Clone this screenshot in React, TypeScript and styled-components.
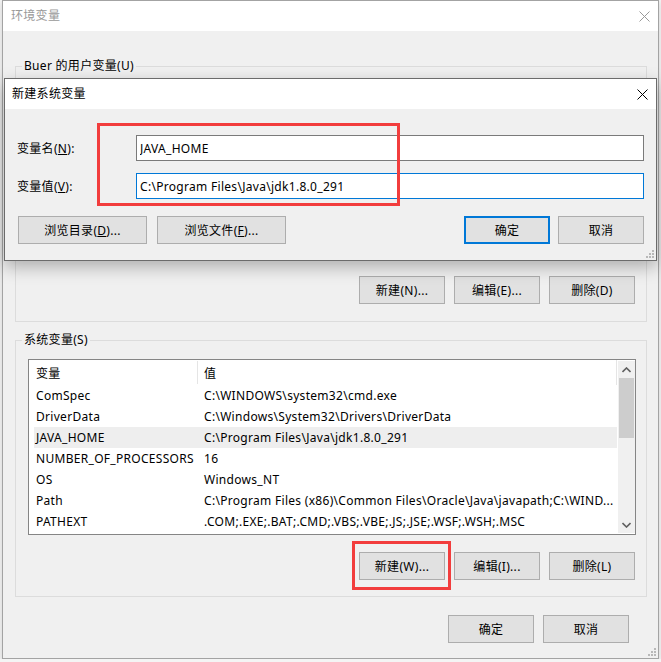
import styled, { createGlobalStyle } from "styled-components";

const GlobalStyle = createGlobalStyle`
  html, body {
    margin: 0;
    padding: 0;
  }
  body {
    background: #f4f4f4;
    font-family: "Noto Sans", "Noto Sans CJK SC", sans-serif;
    font-size: 12px;
    letter-spacing: 0.3px;
    color: #000;
  }
`;

const rows = [
  ["ComSpec", "C:\\WINDOWS\\system32\\cmd.exe"],
  ["DriverData", "C:\\Windows\\System32\\Drivers\\DriverData"],
  ["JAVA_HOME", "C:\\Program Files\\Java\\jdk1.8.0_291"],
  ["NUMBER_OF_PROCESSORS", "16"],
  ["OS", "Windows_NT"],
  [
    "Path",
    "C:\\Program Files (x86)\\Common Files\\Oracle\\Java\\javapath;C:\\WIND...",
  ],
  ["PATHEXT", ".COM;.EXE;.BAT;.CMD;.VBS;.VBE;.JS;.JSE;.WSF;.WSH;.MSC"],
];

const Window = styled.div`
  position: relative;
  box-sizing: border-box;
  width: 657px;
  height: 659px;
  margin-left: 2px;
  border: 1px solid #a3a3a3;
  background: #f0f0f0;
  display: flex;
  flex-direction: column;
  box-shadow: 0 2px 6px rgba(0, 0, 0, 0.15);
`;

const TitleBar = styled.div<{ $active?: boolean }>`
  height: 30px;
  flex: none;
  background: #fff;
  display: flex;
  align-items: center;
  justify-content: space-between;
  padding-left: ${(p) => (p.$active ? 7 : 8)}px;
  color: ${(p) => (p.$active ? "#000" : "#999")};
  line-height: 16px;
`;

const CloseBox = styled.div`
  width: 28px;
  height: 30px;
  display: flex;
  align-items: center;
  justify-content: center;
`;

const WindowBody = styled.div`
  display: flex;
  flex-direction: column;
  padding: 27px 11px 16px 12px;
`;

const GroupBox = styled.fieldset<{ $top?: number }>`
  margin: ${(p) => p.$top ?? 0}px 0 0 0;
  padding: 0;
  border: 1px solid #dcdcdc;
  min-width: 0;
`;

const GroupLegend = styled.legend`
  margin-left: 6px;
  padding: 0 2px;
  line-height: 16px;
`;

const GroupContent = styled.div<{ $bottom: number }>`
  display: flex;
  flex-direction: column;
  padding: 11px 10px ${(p) => p.$bottom}px 12px;
`;

const ListView = styled.div<{ $h: number }>`
  box-sizing: border-box;
  height: ${(p) => p.$h}px;
  border: 1px solid #858585;
  background: #fff;
  display: flex;
`;

const ListContent = styled.div`
  flex: 1;
  min-width: 0;
  display: flex;
  flex-direction: column;
`;

const ListHeader = styled.div`
  display: grid;
  grid-template-columns: 169px 1fr;
  height: 25px;
  align-items: stretch;
  border-right: 1px solid #e5e5e5;
`;

const HeaderCell = styled.div<{ $pad: number; $divider?: boolean }>`
  display: flex;
  align-items: center;
  padding-left: ${(p) => p.$pad}px;
  margin: 1px 0;
  border-right: ${(p) => (p.$divider ? "1px solid #e5e5e5" : "none")};
`;

const ListRow = styled.div<{ $selected?: boolean }>`
  display: grid;
  grid-template-columns: 168px 1fr;
  height: 21px;
  line-height: 21px;
  margin-left: 5px;
  background: ${(p) => (p.$selected ? "#eeeeee" : "transparent")};
`;

const Cell = styled.div`
  padding-left: 2px;
  white-space: nowrap;
  overflow: hidden;
`;

const ScrollBar = styled.div`
  width: 17px;
  margin: 1px 0 1px 1px;
  background: #f0f0f0;
  display: flex;
  flex-direction: column;
`;

const ScrollArrow = styled.div`
  height: 17px;
  display: flex;
  align-items: center;
  justify-content: center;
`;

const ScrollThumb = styled.div`
  height: 60px;
  margin: 0 1px;
  background: #cdcdcd;
`;

const ScrollTrack = styled.div`
  flex: 1;
`;

const ButtonRow = styled.div<{ $top: number; $right?: number }>`
  display: flex;
  justify-content: flex-end;
  gap: 9px;
  margin-top: ${(p) => p.$top}px;
  margin-right: ${(p) => p.$right ?? 0}px;
`;

const ButtonGroup = styled.div<{ $gap: number; $left?: number }>`
  display: flex;
  gap: ${(p) => p.$gap}px;
  margin-left: ${(p) => p.$left ?? 0}px;
`;

const Button = styled.button<{
  $w?: number;
  $primary?: boolean;
  $marked?: boolean;
}>`
  position: relative;
  box-sizing: border-box;
  width: ${(p) => p.$w ?? 86}px;
  height: 28px;
  padding: 0;
  background: #e1e1e1;
  border: ${(p) => (p.$primary ? "2px solid #0078d7" : "1px solid #adadad")};
  font-family: inherit;
  font-size: 12px;
  letter-spacing: inherit;
  color: #000;

  &::after {
    content: "";
    display: ${(p) => (p.$marked ? "block" : "none")};
    position: absolute;
    inset: -12px -7px -11px -8px;
    border: 3px solid #f23d3d;
    pointer-events: none;
  }
`;

const Dialog = styled.div`
  position: absolute;
  left: 1px;
  top: 77px;
  z-index: 2;
  box-sizing: border-box;
  width: 653px;
  border: 1px solid #6b6b6b;
  background: #f0f0f0;
  display: flex;
  flex-direction: column;
  box-shadow: 0 6px 16px rgba(0, 0, 0, 0.28);
`;

const DialogBody = styled.div`
  position: relative;
  display: flex;
  flex-direction: column;
  gap: 12px;
  padding: 26px 12px 16px 12px;
`;

const FieldRow = styled.div`
  display: grid;
  grid-template-columns: 119px 1fr;
  align-items: center;
`;

const TextInput = styled.input<{ $focused?: boolean }>`
  box-sizing: border-box;
  height: 26px;
  padding: 0 3px;
  border: 1px solid ${(p) => (p.$focused ? "#0078d7" : "#7a7a7a")};
  background: #fff;
  font-family: "Noto Sans", "Noto Sans CJK SC", sans-serif;
  font-size: 12px;
  letter-spacing: 0.3px;
  color: #000;
  outline: none;
`;

const DialogButtons = styled.div`
  display: flex;
  justify-content: space-between;
  margin-top: 5px;
`;

const Highlight = styled.div`
  position: absolute;
  left: 92px;
  top: 14px;
  width: 303px;
  height: 83px;
  box-sizing: border-box;
  border: 3px solid #f23d3d;
  pointer-events: none;
`;

const Grip = styled.svg`
  position: absolute;
  right: 2px;
  bottom: 2px;
`;

const CloseIcon = ({ color }: { color: string }) => (
  <svg width="11" height="11" viewBox="0 0 11 11">
    <path d="M0.5 0.5 L10.5 10.5 M10.5 0.5 L0.5 10.5" stroke={color} strokeWidth="1" />
  </svg>
);

const Chevron = ({ up }: { up?: boolean }) => (
  <svg width="9" height="6" viewBox="0 0 9 6">
    <path
      d={up ? "M0.5 5 L4.5 1 L8.5 5" : "M0.5 1 L4.5 5 L8.5 1"}
      stroke="#606060"
      strokeWidth="1.6"
      fill="none"
    />
  </svg>
);

const ResizeGrip = () => (
  <Grip width="8" height="8" viewBox="0 0 8 8">
    {[
      [6, 0],
      [3, 3],
      [6, 3],
      [0, 6],
      [3, 6],
      [6, 6],
    ].map(([x, y], i) => (
      <rect key={i} x={x} y={y} width="2" height="2" fill="#b8b8b8" />
    ))}
  </Grip>
);

export default function App() {
  return (
    <>
      <GlobalStyle />
      <Window>
        <TitleBar>
          <span>环境变量</span>
          <CloseBox>
            <CloseIcon color="#999" />
          </CloseBox>
        </TitleBar>

        <WindowBody>
          <GroupBox>
            <GroupLegend>Buer 的用户变量(U)</GroupLegend>
            <GroupContent $bottom={17}>
              <ListView $h={174} />
              <ButtonRow $top={17} $right={1}>
                <Button>新建(N)...</Button>
                <Button>编辑(E)...</Button>
                <Button>删除(D)</Button>
              </ButtonRow>
            </GroupContent>
          </GroupBox>

          <GroupBox $top={10}>
            <GroupLegend>系统变量(S)</GroupLegend>
            <GroupContent $bottom={16}>
              <ListView $h={176}>
                <ListContent>
                  <ListHeader>
                    <HeaderCell $pad={7} $divider>
                      变量
                    </HeaderCell>
                    <HeaderCell $pad={6}>值</HeaderCell>
                  </ListHeader>
                  {rows.map(([name, value]) => (
                    <ListRow key={name} $selected={name === "JAVA_HOME"}>
                      <Cell>{name}</Cell>
                      <Cell>{value}</Cell>
                    </ListRow>
                  ))}
                </ListContent>
                <ScrollBar>
                  <ScrollArrow>
                    <Chevron up />
                  </ScrollArrow>
                  <ScrollThumb />
                  <ScrollTrack />
                  <ScrollArrow>
                    <Chevron />
                  </ScrollArrow>
                </ScrollBar>
              </ListView>
              <ButtonRow $top={17} $right={1}>
                <Button $marked>新建(W)...</Button>
                <Button>编辑(I)...</Button>
                <Button>删除(L)</Button>
              </ButtonRow>
            </GroupContent>
          </GroupBox>

          <ButtonRow $top={18} $right={18}>
            <Button>确定</Button>
            <Button>取消</Button>
          </ButtonRow>
        </WindowBody>
        <ResizeGrip />

        <Dialog>
          <TitleBar $active>
            <span>新建系统变量</span>
            <CloseBox>
              <CloseIcon color="#000" />
            </CloseBox>
          </TitleBar>
          <DialogBody>
            <FieldRow>
              <span>
                变量名(<u>N</u>):
              </span>
              <TextInput readOnly value="JAVA_HOME" />
            </FieldRow>
            <FieldRow>
              <span>
                变量值(<u>V</u>):
              </span>
              <TextInput readOnly $focused value="C:\Program Files\Java\jdk1.8.0_291" />
            </FieldRow>
            <DialogButtons>
              <ButtonGroup $gap={10} $left={1}>
                <Button $w={129}>
                  浏览目录(<u>D</u>)...
                </Button>
                <Button $w={129}>
                  浏览文件(<u>F</u>)...
                </Button>
              </ButtonGroup>
              <ButtonGroup $gap={8}>
                <Button $primary>确定</Button>
                <Button>取消</Button>
              </ButtonGroup>
            </DialogButtons>
            <Highlight />
          </DialogBody>
          <ResizeGrip />
        </Dialog>
      </Window>
    </>
  );
}
